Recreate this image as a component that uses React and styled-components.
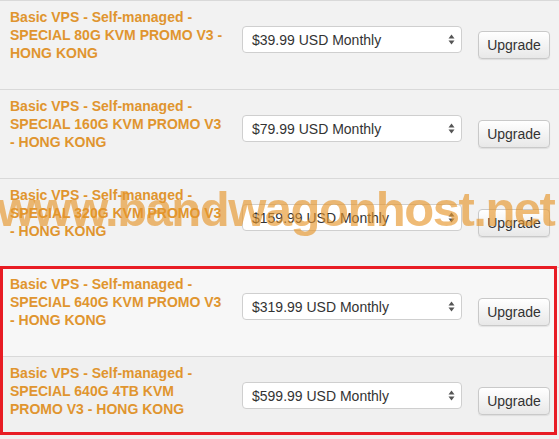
import styled, { createGlobalStyle } from "styled-components";

const GlobalStyle = createGlobalStyle`
  html, body {
    margin: 0;
    padding: 0;
    background: #f1f1f1;
    font-family: "Liberation Sans", Arial, Helvetica, sans-serif;
    overflow: hidden;
  }
`;

const Page = styled.div`
  position: relative;
  width: 559px;
  height: 439px;
  overflow: hidden;
`;

const Row = styled.div`
  display: grid;
  grid-template-columns: 215px 220px 72px;
  column-gap: 17px;
  align-items: start;
  box-sizing: border-box;
  height: 89px;
  padding: 7px 0 0 10px;
  border-top: 1px solid #d9d9d9;
  background: ${({ bg }) => bg || "#f2f2f2"};
`;

const Title = styled.div`
  color: #e0952f;
  font-weight: bold;
  font-size: 14px;
  line-height: 18px;
`;

const SelectBox = styled.div`
  display: flex;
  align-items: center;
  justify-content: space-between;
  box-sizing: border-box;
  height: 27px;
  margin-top: 18px;
  padding: 0 6px 0 9px;
  background: #fff;
  border: 1px solid #cfcfcf;
  border-radius: 4px;
  color: #333;
  font-size: 14px;
`;

const Button = styled.button`
  box-sizing: border-box;
  width: 72px;
  height: 28px;
  margin-top: 23px;
  margin-left: -1px;
  padding: 0;
  font-family: inherit;
  font-size: 14px;
  color: #333;
  background: linear-gradient(#ffffff, #e8e8e8);
  border: 1px solid #c9c9c9;
  border-radius: 4px;
  box-shadow: 0 1px 1px rgba(0, 0, 0, 0.08);
`;

const Highlight = styled.div`
  position: relative;
  &::after {
    content: "";
    position: absolute;
    top: -1px;
    left: 0;
    width: 557px;
    height: 169px;
    box-sizing: border-box;
    border: 3px solid #e81c24;
    pointer-events: none;
  }
`;

const Watermark = styled.div`
  position: absolute;
  top: 181px;
  left: -3px;
  font-family: "Liberation Sans", Arial, sans-serif;
  font-weight: bold;
  font-size: 49px;
  letter-spacing: -1.5px;
  color: rgba(230, 148, 40, 0.64);
  white-space: nowrap;
  pointer-events: none;
`;

const Arrows = () => (
  <svg width="7" height="11" viewBox="0 0 7 11">
    <path d="M3.5 0.5 L6.5 4.5 L0.5 4.5 Z" fill="#555" />
    <path d="M3.5 10.5 L6.5 6.5 L0.5 6.5 Z" fill="#555" />
  </svg>
);

const plans = [
  { title: ["Basic VPS - Self-managed -", "SPECIAL 80G KVM PROMO V3 -", "HONG KONG"], price: "$39.99" },
  { title: ["Basic VPS - Self-managed -", "SPECIAL 160G KVM PROMO V3", "- HONG KONG"], price: "$79.99" },
  { title: ["Basic VPS - Self-managed -", "SPECIAL 320G KVM PROMO V3", "- HONG KONG"], price: "$159.99" },
];

const highlighted = [
  { title: ["Basic VPS - Self-managed -", "SPECIAL 640G KVM PROMO V3", "- HONG KONG"], price: "$319.99", bg: "#f7f7f7" },
  { title: ["Basic VPS - Self-managed -", "SPECIAL 640G 4TB KVM", "PROMO V3 - HONG KONG"], price: "$599.99", bg: "#f0f0f0" },
];

const PlanRow = ({ plan }) => (
  <Row bg={plan.bg}>
    <Title>
      {plan.title.map((line, i) => (
        <div key={i}>{line}</div>
      ))}
    </Title>
    <SelectBox>
      <span>{plan.price} USD Monthly</span>
      <Arrows />
    </SelectBox>
    <Button>Upgrade</Button>
  </Row>
);

export default function App() {
  return (
    <Page>
      <GlobalStyle />
      {plans.map((p, i) => (
        <PlanRow key={i} plan={p} />
      ))}
      <Highlight>
        {highlighted.map((p, i) => (
          <PlanRow key={i} plan={p} />
        ))}
      </Highlight>
      <Watermark>www.bandwagonhost.net</Watermark>
    </Page>
  );
}
